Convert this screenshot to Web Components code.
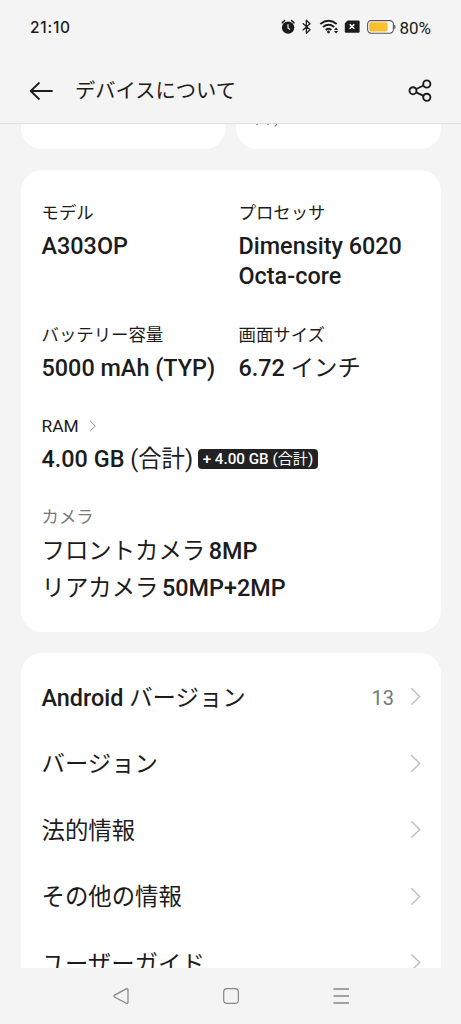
<!DOCTYPE html>
<html lang="ja">
<head>
<meta charset="utf-8">
<title>デバイスについて</title>
<style>
html,body{margin:0;height:100%;background:#f4f4f4}
body{font-family:Roboto,"Noto Sans CJK JP",sans-serif;color:#1c1c1c;overflow:hidden}
</style>
</head>
<body>
<about-screen></about-screen>
<script>
const define = (name, css, html) => customElements.define(name, class extends HTMLElement {
  constructor() {
    super();
    const t = document.createElement('template');
    t.innerHTML = `<style>*{box-sizing:border-box}svg{display:block;flex:none}${css}</style>${html}`;
    this.attachShadow({mode: 'open'}).append(t.content.cloneNode(true));
  }
});

define('status-bar', `
:host{display:flex;align-items:center;height:54px;padding:0 30px 0 30px;flex:none}
.time{font:500 15.5px/20px Inter,Roboto,sans-serif;letter-spacing:.75px;margin-right:auto;padding-top:1px}
.pct{font-size:17px;line-height:20px;margin-left:1px;padding-top:2px}
`, `
<span class="time">21:10</span>
<svg width="118" height="20" viewBox="280 17 118 20" fill="none" stroke="#1c1c1c">
  <circle cx="286.100" cy="27.600" r="6.200" fill="#1c1c1c" stroke="none" transform="translate(2)"/>
  <path d="M282.200 22.800l2.400-2.200M294 22.800l-2.400-2.200" stroke-width="1.500" stroke-linecap="round"/>
  <path d="M288 24.300v3.600l2 1.500" stroke="#f4f4f4" stroke-width="1.200"/>
  <path d="M303 23.600l7 6.200-3.600 3.600V20.200l3.600 3.500-7 6.200" stroke-width="1.300" stroke-linejoin="round" stroke-linecap="round"/>
  <path d="M320.300 23.900q8.200-6.400 16.400 0M323 27q5.600-4.300 11.200 0M325.700 29.900q2.900-2.200 5.600 0" stroke-width="1.900"/>
  <circle cx="328.500" cy="32" r="1.400" fill="#1c1c1c" stroke="none"/>
  <path d="M334 29.900h4.200l-2.100-2.500zM334 31h4.200l-2.100 2.500z" fill="#1c1c1c" stroke="none"/>
  <path d="M347.600 20.400h10.800q1.200 0 1.200 1.200v10q0 1.200-1.200 1.200h-12.400q-1.200 0-1.200-1.200v-8.400z" fill="#1c1c1c" stroke="none"/>
  <path d="M349.700 24.200l4.600 4.600M354.300 24.200l-4.600 4.600" stroke="#fff" stroke-width="1.500"/>
  <rect x="367.600" y="20.600" width="25.800" height="12.600" rx="3.600" stroke="#555" stroke-width="1.100" fill="#fafafa"/>
  <rect x="369.200" y="22.300" width="18.300" height="9.200" rx="1.800" fill="#fdbf2d" stroke="none"/>
  <path d="M394 24.600q1.700.4 1.700 2.300t-1.700 2.300z" fill="#777" stroke="none"/>
</svg>
<span class="pct">80%</span>`);

define('title-bar', `
:host{display:flex;align-items:center;height:70px;padding:4px 28px 0 29px;border-bottom:1px solid #e0e0e0;flex:none}
h1{margin:0 auto 0 22px;padding-top:1px;font-size:20.3px;font-weight:400;line-height:30px}
`, `
<svg width="24" height="20" viewBox="0 0 24 20" fill="none" stroke="#1c1c1c" stroke-width="1.800" stroke-linecap="round" stroke-linejoin="round"><path d="M23 10H1.700M10 2L1.700 10l8.300 8"/></svg>
<h1><slot></slot></h1>
<svg width="26" height="26" viewBox="407 78 26 26" fill="none" stroke="#1c1c1c" stroke-width="1.900"><circle cx="413" cy="90.700" r="3.500"/><circle cx="426.800" cy="84" r="3.600"/><circle cx="426.800" cy="97.300" r="3.600"/><path d="M416.200 89l7.400-3.500M416.200 92.300l7.400 3.500"/></svg>`);

define('tile-stub', `
:host{display:block;height:25px;background:#fff;border-radius:0 0 21px 21px;overflow:hidden;font-size:16px;line-height:20px;color:#666;padding-left:20px}
div{margin-top:-16.500px}
`, `<div><slot></slot></div>`);

define('info-item', `
:host{display:block;white-space:nowrap}
.label{display:flex;align-items:center;gap:10px;font-size:17.4px;line-height:24px;height:24px}
:host([muted]) .label{color:#7a7a7a}
.value{margin-top:var(--gap,7px);font-size:23.4px;font-weight:500;line-height:30px}
`, `<div class="label"><slot name="label"></slot></div><div class="value"><slot></slot></div>`);

define('ram-chip', `
:host{display:inline-flex;align-items:center;height:20px;padding:0 4.500px;border-radius:4px;background:#222;color:#fff;font-size:15.2px;line-height:20px;font-weight:500;white-space:pre}
`, `<slot></slot>`);

define('chevron-icon', `
:host{display:block;flex:none}
svg{stroke:#c0c0c0}
:host([small]) svg{width:8px;height:12px;stroke:#8a8a8a}
`, `<svg width="12" height="19" viewBox="0 0 12 19" fill="none" stroke-width="1.500"><path d="M1.300 1.300L9.700 9.500l-8.400 8.200"/></svg>`);

define('nav-row', `
:host{display:flex;align-items:center;height:66.5px;padding:0 19px 0 20.5px;font-size:23.4px;font-weight:500;line-height:34px;white-space:nowrap}
span{padding-top:1px}
chevron-icon{margin-top:-1px}
.detail{margin-left:auto;margin-right:16px;font-size:20px;font-weight:400;color:#777}
`, `<span><slot></slot></span><span class="detail"><slot name="detail"></slot></span><chevron-icon></chevron-icon>`);

define('system-nav', `
:host{display:flex;align-items:center;justify-content:center;height:56px;flex:none;background:#f4f4f4}
`, `<svg width="240" height="20" viewBox="111 986 240 20" fill="none" stroke="#858585" stroke-width="1.200" stroke-linejoin="round">
<path d="M114.600 995.100l11.600-6.200q1.800-.7 1.800 1v12.300q0 1.700-1.800 1l-11.600-6.200q-1.500-1 0-1.900z"/>
<rect x="223.700" y="988.700" width="14.700" height="14.700" rx="3.500"/>
<path d="M333.500 989h15.500M333.500 996h15.500M333.500 1003h15.500" stroke-width="1.400"/></svg>`);

define('about-screen', `
:host{display:flex;flex-direction:column;width:461px;height:1024px;background:#f4f4f4;overflow:hidden}
main{flex:1;min-height:0;overflow:hidden;padding:0 20px 0 21px}
.tiles{display:grid;grid-template-columns:205px 205px;gap:10px}
.card{background:#fff;border-radius:21px;margin-top:21px}
.info{height:462px;padding:31px 0 0 20.500px;display:grid;grid-template-columns:197px 1fr;grid-template-rows:91px 60px 60px 97px;row-gap:31px;align-content:start}
.wide{grid-column:1/3}
.jp{font-weight:400}
.line{display:flex;align-items:center;gap:5px}
.list{padding-top:11px}
.second{margin-top:7px}
.second .jp,.first .jp{margin-right:3.500px}
`, `
<status-bar></status-bar>
<title-bar>デバイスについて</title-bar>
<main>
  <div class="tiles"><tile-stub></tile-stub><tile-stub>,&nbsp;&nbsp;,&nbsp;)</tile-stub></div>
  <section class="card info">
    <info-item style="--gap:6px"><span slot="label">モデル</span>A303OP</info-item>
    <info-item style="--gap:6px"><span slot="label">プロセッサ</span>Dimensity 6020<br>Octa-core</info-item>
    <info-item style="--gap:6px"><span slot="label">バッテリー容量</span>5000 mAh (TYP)</info-item>
    <info-item style="--gap:6px"><span slot="label">画面サイズ</span>6.72 <span class="jp">インチ</span></info-item>
    <info-item class="wide" style="--gap:6px"><span slot="label">RAM</span><chevron-icon slot="label" small></chevron-icon><div class="line"><span>4.00 GB <span class="jp">(合計)</span></span><ram-chip>+ 4.00 GB <span class="jp">(合計)</span></ram-chip></div></info-item>
    <info-item class="wide" muted style="--gap:7px"><span slot="label">カメラ</span><div class="first"><span class="jp">フロントカメラ</span>8MP</div><div class="second"><span class="jp">リアカメラ</span>50MP+2MP</div></info-item>
  </section>
  <section class="card list">
    <nav-row><span>Android <span class="jp">バージョン</span></span><span slot="detail">13</span></nav-row>
    <nav-row><span class="jp">バージョン</span></nav-row>
    <nav-row><span class="jp">法的情報</span></nav-row>
    <nav-row><span class="jp">その他の情報</span></nav-row>
    <nav-row><span class="jp">ユーザーガイド</span></nav-row>
  </section>
</main>
<system-nav></system-nav>`);
</script>
</body>
</html>
